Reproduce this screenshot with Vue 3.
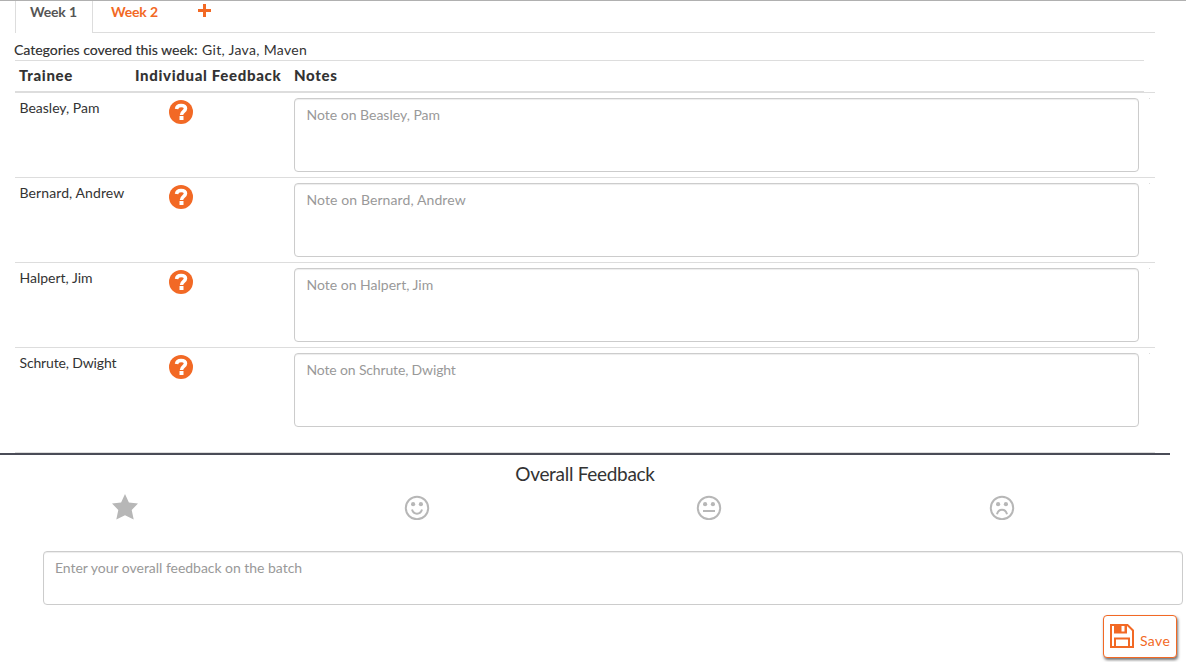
<script setup>
const trainees = [
  { name: 'Beasley, Pam', key: 'pam' },
  { name: 'Bernard, Andrew', key: 'andrew' },
  { name: 'Halpert, Jim', key: 'jim' },
  { name: 'Schrute, Dwight', key: 'dwight' },
]
const moods = ['star', 'smile', 'neutral', 'sad']
</script>

<template>
  <div class="page">
    <nav class="tabs">
      <a class="tab active"><span>Week 1</span></a>
      <a class="tab second"><span>Week 2</span></a>
      <a class="tab add">
        <svg width="14" height="13" viewBox="0 0 14 13"><path d="M5 0h3v5h5v3H8v5H5V8H0V5h5z" fill="#f26925" /></svg>
      </a>
    </nav>
    <div class="categories"><span class="label">Categories covered this week:</span><span class="list">Git, Java, Maven</span></div>
    <div class="head">
      <span class="c1">Trainee</span><span class="c2">Individual Feedback</span><span class="c3">Notes</span>
    </div>
    <div class="rows">
      <div v-for="t in trainees" :key="t.key" class="row">
        <span class="name" :class="t.key">{{ t.name }}</span>
        <svg class="help" width="24" height="24" viewBox="0 0 24 24">
          <circle cx="12" cy="12" r="12" fill="#f26925" />
          <path d="M7.500 9C7.900 6.500 9.600 5.600 12 5.600c2.600 0 4.500 1.100 4.500 3 0 2.800-4 2.800-4 6.400" fill="none" stroke="#fff" stroke-width="3.5" />
          <path d="M10.500 16h4v4h-4z" fill="#fff" />
        </svg>
        <div class="note"><span :class="t.key">Note on {{ t.name }}</span></div>
        <i class="speck"></i>
      </div>
    </div>
    <section class="overall">
      <h4><span>Overall Feedback</span></h4>
      <div class="moods">
        <div v-for="m in moods" :key="m" class="mood">
          <svg width="26" height="26" viewBox="0 0 26 26">
            <path v-if="m === 'star'" d="M13 0l3.900 8.600 9.100.9-6.300 6.500 2 9.400L13 21.300l-8.700 4.100 2-9.400L0 9.500l9.100-.9z" fill="#b7b7b7" />
            <g v-else fill="none" stroke="#b7b7b7" stroke-width="2">
              <circle cx="13" cy="14" r="11.2" />
              <g fill="#b7b7b7" stroke="none"><circle cx="9.100" cy="10.200" r="2.100" /><circle cx="16.900" cy="10.200" r="2.100" /></g>
              <path v-if="m === 'smile'" d="M8 15.500c.8 2.700 2.700 4.200 5 4.200s4.200-1.500 5-4.200" />
              <path v-else-if="m === 'neutral'" d="M7 17h12" />
              <path v-else d="M8 20.200c.8-3.200 2.700-4.500 5-4.500s4.200 1.300 5 4.500" />
            </g>
          </svg>
        </div>
      </div>
      <div class="comment"><span>Enter your overall feedback on the batch</span></div>
      <div class="actions">
        <button class="save">
          <svg width="24" height="24" viewBox="0 0 24 24">
            <path d="M1 1h16.500L23 6.500V23H1z" fill="none" stroke="#f26925" stroke-width="2" />
            <path d="M4 1h13v8.500H4z" fill="#f26925" /><path d="M11.500 2h3v5.500h-3z" fill="#fff" />
            <path d="M5 23v-8.500h14V23" fill="none" stroke="#f26925" stroke-width="2" />
          </svg>
          <span>Save</span>
        </button>
      </div>
    </section>
  </div>
</template>

<style>
html, body { background: #fff; overflow: hidden; }
</style>

<style scoped>
* { box-sizing: border-box; }
.page { width: 1186px; height: 662px; border-top: 1px solid #b0b0b0; overflow: hidden; font-family: Lato, "Liberation Sans", sans-serif; font-size: 14px; line-height: 20px; color: #333; white-space: nowrap; }
.tabs { display: flex; height: 32px; margin-left: 15px; width: 1140px; border-bottom: 1px solid #ddd; font-weight: 700; letter-spacing: -.15px; color: #f26925; }
.tab { display: block; height: 32px; padding-top: 1px; }
.active { width: 78px; padding-left: 14px; border: solid #ddd; border-width: 0 1px; background: #fff; color: #555; }
.second { padding-left: 18px; width: 105px; }
.add svg { display: block; margin-top: 2px; }
.categories { display: flex; height: 27px; padding: 7px 0 0 14px; }
.label { width: 188px; text-shadow: .3px 0 rgba(51,51,51,.4); }
.list { letter-spacing: .32px; }
.head { display: flex; width: 1129px; height: 33px; margin-left: 15px; padding: 4px 0 0 4px; border-top: 1px solid #ddd; border-bottom: 2px solid #ddd; font-size: 15px; font-weight: 900; letter-spacing: .67px; }
.c1 { width: 116px; }
.c2 { width: 159px; }
.rows { width: 1140px; margin: -1px 0 0 15px; }
.row { display: flex; height: 85px; padding: 5px 0 0 4px; border-top: 1px solid #ddd; }
.name { width: 150px; padding-left: .5px; }
.andrew { letter-spacing: .1px; }
.dwight { letter-spacing: -.15px; }
.help { display: block; margin-top: 2px; }
.note { width: 845px; height: 74px; margin-left: 101px; padding: 6px 11.5px; }
.note, .comment { border: 1px solid #ccc; border-radius: 4px; box-shadow: inset 0 1px 1px rgba(0,0,0,.075); color: #999; }
.speck { width: 1px; height: 1px; margin-left: 10px; background: #ddd; }
.rows::after { content: ""; display: block; margin-top: 20px; height: 1px; background: #ddd; }
.overall::before { content: ""; display: block; width: 1170px; height: 2px; background: #4a4c57; }
h4 { width: 1170px; margin: 0; padding-top: 8px; height: 39px; font-size: 19px; line-height: 22px; font-weight: 400; letter-spacing: -.3px; text-align: center; }
.moods { display: flex; margin-left: -21.5px; height: 57px; }
.mood { width: 292.4px; display: flex; justify-content: center; }
.comment { width: 1140px; height: 54px; margin-left: 43px; padding: 6px 11px; letter-spacing: -.03px; }
.actions { display: flex; justify-content: flex-end; padding: 10px 9px 0 0; }
.save { display: flex; width: 74px; height: 43px; padding: 8px 5px 0 6px; border: 1px solid #f26925; border-radius: 4px; background: #fff; color: #f26925; font: 14px/20px Lato, sans-serif; box-shadow: 1px 2px 3px rgba(0,0,0,.55); }
.save span { margin: 7px 0 0 6px; letter-spacing: .35px; }
</style>
